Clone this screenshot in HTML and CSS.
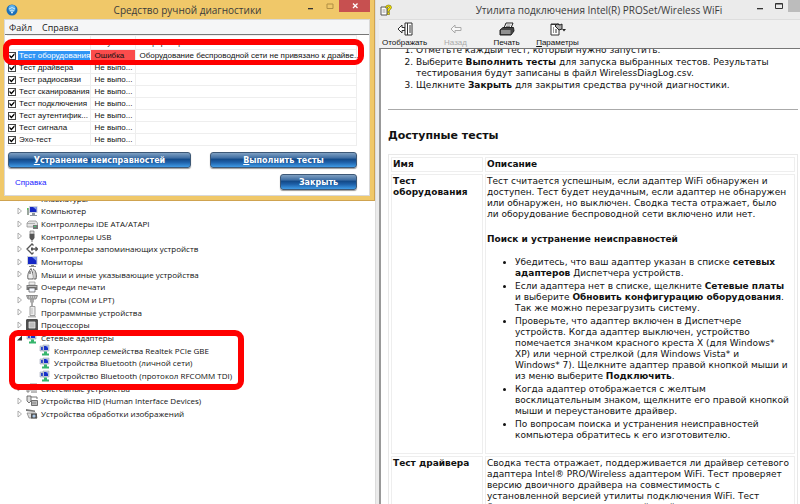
FILE: index.html
```html
<!DOCTYPE html>
<html lang="ru">
<head>
    <meta charset="UTF-8">
    <meta name="viewport" content="width=device-width, initial-scale=1.0">
    <title>Средство ручной диагностики</title>
    <link rel="stylesheet" href="styles.css">
</head>
<body>

    <!-- Icon set -->
    <svg class="sprite" aria-hidden="true">
        <symbol id="arrow" viewBox="0 0 6 8"><path d="M1 1l3.5 3L1 7z" fill="#fff" stroke="#999" stroke-width=".8"/></symbol>
        <symbol id="arrow-open" viewBox="0 0 6 8"><path d="M5 1.5v5H0z" fill="#333"/></symbol>
        <symbol id="computer" viewBox="0 0 12 12"><path d="M1 3h2v7H1z" fill="#9aa59c"/><path d="M1 3h1v2H1z" fill="#5c5"/><path d="M3 1h8.5v7H3z" fill="#c9d0dc"/><path d="M4 2h6.5v5H4z" fill="#1527c4"/><path d="M7 2h3.500v3z" fill="#7f9bf0"/><path d="M6 8h3v2h2v1H4v-1h2z" fill="#8d959f"/></symbol>
        <symbol id="drive" viewBox="0 0 12 12"><path d="M1 5l2-2h7l1.500 2v4H1z" fill="#e4e4e4" stroke="#888" stroke-width=".7"/><path d="M1 5.500h8" stroke="#999" stroke-width=".7"/><path d="M7 7h5v4H7z" fill="#777"/><path d="M8 8h2v1H8z" fill="#4c7"/></symbol>
        <symbol id="usb" viewBox="0 0 12 12"><path d="M4 1h4v3H4z" fill="#ddd" stroke="#777" stroke-width=".7"/><path d="M3.500 4h5v4L7 10H5L3.500 8z" fill="#555"/><path d="M6 10v2" stroke="#777"/></symbol>
        <symbol id="storage" viewBox="0 0 12 12"><path d="M7.500 2.500L6 1 1 6l5 5 1.500-1.500M5 6h6.500M9.500 4l2 2-2 2" fill="none" stroke="#555" stroke-width="1.300"/><path d="M5 4.500h2v3H5z" fill="#555"/></symbol>
        <symbol id="monitor" viewBox="0 0 12 12"><path d="M1 0h10.500v9H1z" fill="#cdd2dc"/><path d="M2 1h8.500v7H2z" fill="#1527c4"/><path d="M6 1h4.500v4z" fill="#7896ee"/><path d="M5 9h3v1h2v1H3v-1h2z" fill="#888"/></symbol>
        <symbol id="mouse" viewBox="0 0 12 12"><path d="M2 11C1 7 3 3 4 2l1-1.500L6 3c1 3 2 6 1 8z" fill="#eee" stroke="#444" stroke-width=".8"/><path d="M7 1c3 1 4 6 3 10H7.500" fill="#ccc" stroke="#555" stroke-width=".9"/><path d="M4 3v3" stroke="#444"/></symbol>
        <symbol id="printer" viewBox="0 0 12 12"><path d="M3 1h6v3H3z" fill="#eee" stroke="#888" stroke-width=".6"/><path d="M.5 4h11v5H.5z" fill="#777"/><path d="M1.500 5h9v1h-9z" fill="#bbb"/><path d="M3 7h6v4H3z" fill="#f4f8ff" stroke="#555" stroke-width=".7"/></symbol>
        <symbol id="port" viewBox="0 0 12 12"><path d="M.5 1.500h11L10 5H2z" fill="#c4c4c4" stroke="#777" stroke-width=".8"/><path d="M2 3h8" stroke="#777" stroke-dasharray="1 1"/><path d="M4.500 5h3v3l-1 1v3h-1V9l-1-1z" fill="#aaa" stroke="#888" stroke-width=".5"/></symbol>
        <symbol id="software" viewBox="0 0 12 12"><path d="M4 .5h5v9H4z" fill="#eee" stroke="#888" stroke-width=".8"/><path d="M6 2v6" stroke="#bbb"/><path d="M2 10h8v1.500H2z" fill="#bbb"/></symbol>
        <symbol id="cpu" viewBox="0 0 12 12"><path d="M.7.700h10.600v10.600H.7z" fill="#555" stroke="#333"/><path d="M3 3h6v6H3z" fill="#bbb" stroke="#eee" stroke-width=".7"/></symbol>
        <symbol id="net" viewBox="0 0 12 12"><path d="M1 2h6v5H1z" fill="#ccd3e0" stroke="#8a93a8" stroke-width=".5"/><path d="M2 3h4v3H2z" fill="#2b45c9"/><path d="M4 1h6v6H4z" fill="#ccd3e0" stroke="#8a93a8" stroke-width=".5"/><path d="M5 2h4v4H5z" fill="#1730c8"/><path d="M7 2h2v2z" fill="#8ca5f5"/><path d="M5 7.500h3v2h2v2H3v-2h2z" fill="#35b56c"/></symbol>
        <symbol id="system" viewBox="0 0 12 12"><path d="M1 3h2v7H1zM4 2h7v6H4z" fill="#ddd" stroke="#777" stroke-width=".8"/><path d="M5 10h6" stroke="#777"/></symbol>
        <symbol id="hid" viewBox="0 0 12 12"><path d="M1 1h4v5L3 8 1 6z" fill="#ddd" stroke="#555" stroke-width=".8"/><path d="M5 2h6v2" fill="none" stroke="#777"/><path d="M5.500 5.500h6v5h-6z" fill="#bbb" stroke="#555" stroke-width=".8"/><path d="M6.500 8h4" stroke="#555" stroke-dasharray="1 1"/></symbol>
        <symbol id="imaging" viewBox="0 0 12 12"><path d="M0 1l9 1.500V4L0 3z" fill="#777"/><path d="M1 5h9l1 5H3z" fill="#ddd" stroke="#777" stroke-width=".7"/><path d="M5 5.500h6v5H5z" fill="#555"/><circle cx="8" cy="8" r="1.600" fill="#a9c6e6"/></symbol>
    </svg>

    <div class="desktop">
        <div class="left-side">

            <section class="dialog">
                <header class="titlebar">
                    <svg class="app-icon" viewBox="0 0 12 12"><circle cx="6" cy="6" r="5.500" fill="#1d6fb8"/><circle cx="6" cy="4.500" r="3.500" fill="#5cb0ea"/><path d="M3 5q3-3 6 0M4 7q2-2 4 0" stroke="#fff" stroke-width=".7" fill="none"/><circle cx="6" cy="8.500" r=".9" fill="#fff"/></svg>
                    <h1>Средство ручной диагностики</h1>
                    <div class="window-controls">
                        <button class="win-btn" aria-label="Свернуть"><svg viewBox="0 0 8 8"><path d="M1 6h5v1.300H1z" fill="#333"/></svg></button>
                        <button class="win-btn" aria-label="Развернуть"><svg viewBox="0 0 8 8"><path d="M1 2h6v4.500H1z" fill="none" stroke="#b08f45"/></svg></button>
                        <button class="win-btn close" aria-label="Закрыть окно"><svg viewBox="0 0 8 8"><path d="M2 1.500l4.500 4.500M6.500 1.500L2 6" stroke="#fff" stroke-width="1.300"/></svg></button>
                    </div>
                </header>
                <div class="dialog-body">
                    <nav class="menu">
                        <a href="#">Файл</a>
                        <a href="#">Справка</a>
                    </nav>
                    <table class="tests">
                        <colgroup><col class="col-name"><col class="col-result"><col></colgroup>
                        <thead>
                            <tr><th>Имя</th><th>Результат</th><th>Информация</th></tr>
                        </thead>
                        <tbody>
                            <tr class="failed"><td><label><input type="checkbox" checked><span>Тест оборудования</span></label></td><td>Ошибка</td><td>Оборудование беспроводной сети не привязано к драйве...</td></tr>
                            <tr><td><label><input type="checkbox" checked><span>Тест драйвера</span></label></td><td>Не выпо...</td><td></td></tr>
                            <tr><td><label><input type="checkbox" checked><span>Тест радиосвязи</span></label></td><td>Не выпо...</td><td></td></tr>
                            <tr><td><label><input type="checkbox" checked><span>Тест сканирования</span></label></td><td>Не выпо...</td><td></td></tr>
                            <tr><td><label><input type="checkbox" checked><span>Тест подключения</span></label></td><td>Не выпо...</td><td></td></tr>
                            <tr><td><label><input type="checkbox" checked><span>Тест аутентифик...</span></label></td><td>Не выпо...</td><td></td></tr>
                            <tr><td><label><input type="checkbox" checked><span>Тест сигнала</span></label></td><td>Не выпо...</td><td></td></tr>
                            <tr><td><label><input type="checkbox" checked><span>Эхо-тест</span></label></td><td>Не выпо...</td><td></td></tr>
                        </tbody>
                    </table>
                    <div class="actions">
                        <button class="btn btn-wide"><u>У</u>странение неисправностей</button>
                        <button class="btn btn-run"><u>В</u>ыполнить тесты</button>
                    </div>
                    <div class="actions bottom">
                        <a class="help" href="#">Справка</a>
                        <button class="btn btn-close">Закрыть</button>
                    </div>
                </div>
                <div class="mark mark-test"></div>
            </section>

            <section class="devices">
                <ul class="tree">
                    <li><svg class="arrow"><use href="#arrow"/></svg><svg class="icon"></svg>Клавиатуры</li>
                    <li><svg class="arrow"><use href="#arrow"/></svg><svg class="icon"><use href="#computer"/></svg>Компьютер</li>
                    <li><svg class="arrow"><use href="#arrow"/></svg><svg class="icon"><use href="#drive"/></svg>Контроллеры IDE ATA/ATAPI</li>
                    <li><svg class="arrow"><use href="#arrow"/></svg><svg class="icon"><use href="#usb"/></svg>Контроллеры USB</li>
                    <li><svg class="arrow"><use href="#arrow"/></svg><svg class="icon"><use href="#storage"/></svg>Контроллеры запоминающих устройств</li>
                    <li><svg class="arrow"><use href="#arrow"/></svg><svg class="icon"><use href="#monitor"/></svg>Мониторы</li>
                    <li><svg class="arrow"><use href="#arrow"/></svg><svg class="icon"><use href="#mouse"/></svg>Мыши и иные указывающие устройства</li>
                    <li><svg class="arrow"><use href="#arrow"/></svg><svg class="icon"><use href="#printer"/></svg>Очереди печати</li>
                    <li><svg class="arrow"><use href="#arrow"/></svg><svg class="icon"><use href="#port"/></svg>Порты (COM и LPT)</li>
                    <li><svg class="arrow"><use href="#arrow"/></svg><svg class="icon"><use href="#software"/></svg>Программные устройства</li>
                    <li><svg class="arrow"><use href="#arrow"/></svg><svg class="icon"><use href="#cpu"/></svg>Процессоры</li>
                    <li><svg class="arrow"><use href="#arrow-open"/></svg><svg class="icon"><use href="#net"/></svg>Сетевые адаптеры</li>
                    <li class="child"><svg class="icon"><use href="#net"/></svg>Контроллер семейства Realtek PCIe GBE</li>
                    <li class="child"><svg class="icon"><use href="#net"/></svg>Устройства Bluetooth (личной сети)</li>
                    <li class="child"><svg class="icon"><use href="#net"/></svg>Устройство Bluetooth (протокол RFCOMM TDI)</li>
                    <li><svg class="arrow"><use href="#arrow"/></svg><svg class="icon"><use href="#system"/></svg>Системные устройства</li>
                    <li><svg class="arrow"><use href="#arrow"/></svg><svg class="icon"><use href="#hid"/></svg>Устройства HID (Human Interface Devices)</li>
                    <li><svg class="arrow"><use href="#arrow"/></svg><svg class="icon"><use href="#imaging"/></svg>Устройства обработки изображений</li>
                </ul>
                <div class="mark mark-net"></div>
            </section>
        </div>

        <section class="help-window">
            <header class="titlebar">
                <svg class="app-icon" viewBox="0 0 12 12"><path d="M1 3h6v8H1z" fill="#fff" stroke="#555"/><path d="M2.500 6h3M2.500 8h3" stroke="#999"/><path d="M5.500 4q0-3 3-3t3 2.500q0 1.500-2 2.500v1.500H7.500V5l2-1.500q0-1-1-1t-1 1.500zM7.500 8.500h2v2h-2z" fill="#f5e400" stroke="#554f00" stroke-width=".5"/></svg>
                <h1>Утилита подключения Intel(R) PROSet/Wireless WiFi</h1>
                <div class="window-controls">
                    <button class="win-btn" aria-label="Свернуть"><svg viewBox="0 0 8 8"><path d="M1 6h6v1.300H1z" fill="#333"/></svg></button>
                    <button class="win-btn" aria-label="Развернуть"><svg viewBox="0 0 8 8"><path d="M.5 1.500h7v5h-7z" fill="none" stroke="#333"/><path d="M.5 2h7" stroke="#333"/></svg></button>
                    <button class="win-btn gray" aria-label="Закрыть окно"></button>
                </div>
            </header>
            <div class="toolbar">
                <button><svg viewBox="0 0 16 14"><path d="M1 7l4-4v2.500h3v3H5V11z" fill="#fff" stroke="#333"/><path d="M8 1h7v12H8z" fill="#fff" stroke="#333"/><path d="M10.500 1v12M12 4h2M12 6h2M12 8h2M12 10h2" stroke="#333"/></svg>Отображать</button>
                <button disabled><svg viewBox="0 0 16 14"><path d="M3 7l4-4v2.500h6v3H7V11z" fill="#f8f8f8" stroke="#aaa"/></svg>Назад</button>
                <button><svg viewBox="0 0 16 14"><path d="M5 6l2-5h7l-2 5z" fill="#fff" stroke="#222"/><path d="M7.500 3h4M7 4.500h4" stroke="#555" stroke-width=".7"/><path d="M1 8l3-2.500h10.500L15 9l-3 4H1z" fill="#444" stroke="#222"/><path d="M2 9h9.500M2 11h9.500" stroke="#ddd"/></svg>Печать</button>
                <button><svg viewBox="0 0 16 14"><path d="M1 2h8v11H1z" fill="#fff" stroke="#333"/><path d="M1 2.500h8M3 6h1M3 8h1M3 10h1M5 8h2M5 10h2" stroke="#333"/><path d="M5 4l2-2 3 1 2-1v5l-3 1-2-2z" fill="#aaa" stroke="#222"/><path d="M12 7h4l-2 2.500z" fill="#222"/></svg><span><u>П</u>араметры</span></button>
            </div>
            <main class="document">
                <ol>
                    <li>Отметьте каждый тест, который нужно запустить.</li>
                    <li>Выберите <b>Выполнить тесты</b> для запуска выбранных тестов. Результаты<br>тестирования будут записаны в файл WirelessDiagLog.csv.</li>
                    <li>Щелкните <b>Закрыть</b> для закрытия средства ручной диагностики.</li>
                </ol>
                <hr>
                <h2>Доступные тесты</h2>
                <table class="info">
                    <tr><th>Имя</th><th>Описание</th></tr>
                    <tr>
                        <th>Тест<br>оборудования</th>
                        <td>
                            <p>Тест считается успешным, если адаптер WiFi обнаружен и<br>доступен. Тест будет неудачным, если адаптер не обнаружен<br>или обнаружен, но выключен. Сводка теста отражает, было<br>ли оборудование беспроводной сети включено или нет.</p>
                            <h3>Поиск и устранение неисправностей</h3>
                            <ul>
                                <li>Убедитесь, что ваш адаптер указан в списке <b>сетевых<br>адаптеров</b> Диспетчера устройств.</li>
                                <li>Если адаптера нет в списке, щелкните <b>Сетевые платы</b><br>и выберите <b>Обновить конфигурацию оборудования</b>.<br>Так же можно перезагрузить систему.</li>
                                <li>Проверьте, что адаптер включен в Диспетчере<br>устройств. Когда адаптер выключен, устройство<br>помечается значком красного креста X (для Windows*<br>XP) или черной стрелкой (для Windows Vista* и<br>Windows* 7). Щелкните адаптер правой кнопкой мыши и<br>из меню выберите <b>Подключить</b>.</li>
                                <li>Когда адаптер отображается с желтым<br>восклицательным знаком, щелкните его правой кнопкой<br>мыши и переустановите драйвер.</li>
                                <li>По вопросам поиска и устранения неисправностей<br>компьютера обратитесь к его изготовителю.</li>
                            </ul>
                        </td>
                    </tr>
                    <tr>
                        <th>Тест драйвера</th>
                        <td>
                            <p>Сводка теста отражает, поддерживается ли драйвер сетевого<br>адаптера Intel® PRO/Wireless адаптером WiFi. Тест проверяет<br>версию двоичного драйвера на совместимость с<br>установленной версией утилиты подключения WiFi. Тест<br>будет неудачным, если двоичный драйвер устарел.</p>
                        </td>
                    </tr>
                </table>
            </main>
        </section>
    </div>

</body>
</html>
```
FILE: styles.css
```css
* {
    box-sizing: border-box;
}

body {
    margin: 0;
    background-color: #fff;
    color: #111;
    font-family: "Liberation Sans", Arial, sans-serif;
    font-size: 8px;
}

button {
    border: 0;
    padding: 0;
    background: none;
    font: inherit;
    color: inherit;
}

.sprite {
    position: absolute;
    width: 0;
    height: 0;
}

.desktop {
    display: grid;
    grid-template-columns: 47fr 53fr;
    height: 100vh;
    overflow: hidden;
}

.left-side {
    border-right: 1px solid #dcdcdc;
    min-width: 0;
}

/* Title bars */
.titlebar {
    display: flex;
    align-items: center;
    height: 19px;
}

.titlebar h1 {
    flex: 1;
    margin: 0;
    padding-left: 56px;
    text-align: center;
    font-family: "Open Sans", "Noto Sans", sans-serif;
    font-size: 10px;
    font-weight: normal;
    color: #3b3b3b;
    white-space: nowrap;
}

.app-icon {
    width: 12px;
    height: 12px;
}

.window-controls {
    display: flex;
    align-self: flex-start;
}

.win-btn {
    display: flex;
    align-items: center;
    justify-content: center;
    width: 19px;
    height: 12px;
}

.win-btn svg {
    width: 8px;
    height: 8px;
}

.win-btn.close {
    width: 31px;
    background-color: #c75050;
}

.win-btn.gray {
    width: 12px;
    background-color: #bcbcbc;
}

/* Diagnostics dialog */
.dialog {
    position: relative;
    z-index: 1;
    padding: 0 4px 4px;
    background-color: #f0c869;
    border: 1px solid #cfa350;
    border-width: 0 1px 1px 0;
}

.dialog .titlebar {
    padding-left: 2px;
}

.dialog-body {
    background-color: #fff;
    border: 1px solid #d9d9d9;
    padding-bottom: 5px;
}

.menu {
    display: flex;
    gap: 10px;
    height: 15px;
    padding: 0 4px;
    align-items: center;
    background-color: #f5f6f7;
    border-bottom: 1px solid #777;
    font-family: "Open Sans", "Noto Sans", sans-serif;
    font-size: 9px;
}

.menu a {
    color: #222;
    text-decoration: none;
}

.tests {
    width: calc(100% - 14px);
    margin: 0 2px;
    border-collapse: collapse;
    table-layout: fixed;
}

.col-name {
    width: 83px;
}

.col-result {
    width: 45px;
}

.tests th,
.tests td {
    height: 12px;
    padding: 0 0 0 4px;
    border: 1px solid #eee;
    border-left: 0;
    font-weight: normal;
    text-align: left;
    line-height: 10px;
    white-space: nowrap;
}

.tests th {
    height: 14px;
}

.tests td:first-child {
    padding-left: 1px;
}

.tests label {
    display: flex;
    align-items: center;
    gap: 3px;
}

.tests input {
    appearance: none;
    flex: none;
    width: 8px;
    height: 8px;
    margin: 0;
    border: 1px solid #444;
    background-color: #fff;
}

.tests input:checked::before {
    content: "";
    display: block;
    width: 6px;
    height: 6px;
    background-color: #000;
    clip-path: polygon(8% 35%, 40% 65%, 92% 8%, 92% 40%, 40% 98%, 8% 68%);
}

.failed label span {
    flex: 1;
    margin-left: -1px;
    padding-left: 1px;
    background-color: #3095f5;
    color: #fff;
}

.failed td:nth-child(2) {
    background-color: #fb4c4c;
}

.actions {
    display: flex;
    justify-content: space-between;
    padding: 0 12px 0 3px;
    margin-top: 6px;
}

.actions.bottom {
    align-items: center;
    padding-left: 10px;
}

.btn {
    height: 16px;
    border: 1px solid #3d5876;
    border-radius: 3px;
    background: linear-gradient(#7fa0c2, #3f6ea3 35%, #134a88 45%, #1d5ea6 65%, #3f9be6);
    box-shadow: 0 1px 1px #999;
    color: #fff;
    font-family: "DejaVu Sans", Verdana, sans-serif;
    font-size: 8px;
    font-weight: bold;
}

.btn-wide {
    width: 183px;
}

.btn-run {
    width: 147px;
}

.btn-close {
    width: 77px;
}

.help {
    color: #1a1aff;
    text-decoration: none;
}

/* Device tree */
.devices {
    position: relative;
    margin-top: -9px;
}

.tree {
    display: grid;
    grid-auto-rows: 1fr;
    height: 228px;
    margin: 0;
    padding: 0 0 0 17px;
    list-style: none;
    font-family: "Open Sans", "Noto Sans", sans-serif;
    font-size: 8px;
}

.tree li {
    display: flex;
    align-items: center;
    min-height: 0;
    white-space: nowrap;
}

.tree .child {
    padding-left: 22px;
}

.arrow {
    width: 6px;
    height: 8px;
    margin-right: 3px;
}

.icon {
    width: 12px;
    height: 12px;
    margin-right: 3px;
}

/* Red highlight frames */
.mark {
    position: absolute;
    border: 6px solid #f00;
    border-radius: 9px;
}

.mark-test {
    left: 3px;
    right: 10px;
    top: 39px;
    height: 26px;
    border-bottom-width: 5px;
}

.mark-net {
    left: 9px;
    width: 235px;
    top: 138px;
    height: 60px;
}

/* Help window */
.help-window {
    display: flex;
    flex-direction: column;
    min-width: 0;
    min-height: 0;
    padding-left: 3px;
    background-color: #ebebeb;
}

.help-window .titlebar {
    padding-left: 1px;
}

.toolbar {
    display: flex;
    height: 29px;
    background-color: #f0f0f0;
    border-top: 1px solid #ddd;
    font-size: 8px;
}

.toolbar button {
    display: flex;
    flex-direction: column;
    align-items: center;
    justify-content: center;
    gap: 2px;
    width: 51px;
    line-height: 9px;
}

.toolbar button:disabled {
    color: #aaa;
}

.toolbar svg {
    width: 16px;
    height: 14px;
}

.document {
    flex: 1;
    min-height: 0;
    overflow: hidden;
    padding: 0 2px 0 7px;
    background-color: #fff;
    border-top: 1px solid #777;
    border-left: 2px solid #999;
    font-family: "DejaVu Sans", Verdana, sans-serif;
    font-size: 9px;
    line-height: 11px;
    white-space: nowrap;
}

.document ol {
    margin: -4px 0 18px;
    padding-left: 28px;
}

.document ol li {
    margin-bottom: 1px;
}

.document hr {
    margin: 0 0 19px;
    border: 0;
    border-top: 1px solid #aaa;
}

.document h2 {
    margin: 0 0 11px;
    font-size: 11px;
    line-height: 14px;
}

.info {
    width: 100%;
    border: 1px solid #e8e8e8;
    border-spacing: 2px;
}

.info th,
.info td {
    padding: 1px;
    border: 1px solid #eee;
    text-align: left;
    vertical-align: top;
}

.info th:first-child {
    width: 92px;
}

.info p {
    margin: 0;
}

.info h3 {
    margin: 14px 0 12px;
    font-size: 9px;
    line-height: 11px;
}

.info ul {
    margin: 0 0 11px;
    padding-left: 28px;
}

.info li {
    margin-bottom: 2px;
}
```
